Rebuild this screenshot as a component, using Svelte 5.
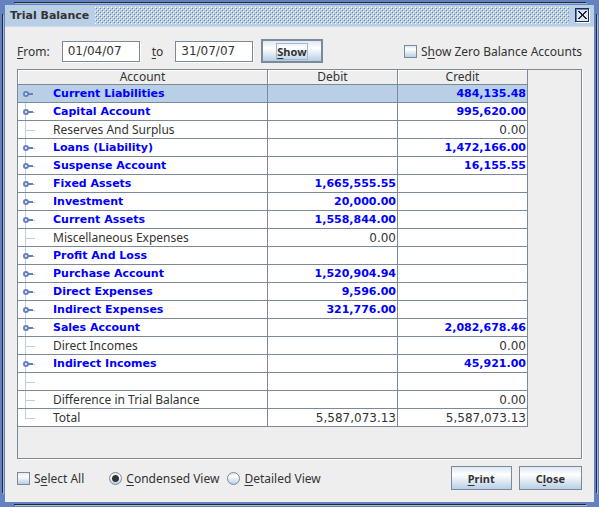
<script>
  let from = $state('01/04/07');
  let to = $state('31/07/07');
  let showZero = $state(false);
  let selectAll = $state(false);
  let view = $state('condensed');

  const rows = [
    { name: 'Current Liabilities', credit: '484,135.48', group: true, selected: true },
    { name: 'Capital Account', credit: '995,620.00', group: true },
    { name: 'Reserves And Surplus', credit: '0.00' },
    { name: 'Loans (Liability)', credit: '1,472,166.00', group: true },
    { name: 'Suspense Account', credit: '16,155.55', group: true },
    { name: 'Fixed Assets', debit: '1,665,555.55', group: true },
    { name: 'Investment', debit: '20,000.00', group: true },
    { name: 'Current Assets', debit: '1,558,844.00', group: true },
    { name: 'Miscellaneous Expenses', debit: '0.00' },
    { name: 'Profit And Loss', group: true },
    { name: 'Purchase Account', debit: '1,520,904.94', group: true },
    { name: 'Direct Expenses', debit: '9,596.00', group: true },
    { name: 'Indirect Expenses', debit: '321,776.00', group: true },
    { name: 'Sales Account', credit: '2,082,678.46', group: true },
    { name: 'Direct Incomes', credit: '0.00' },
    { name: 'Indirect Incomes', credit: '45,921.00', group: true },
    { name: '' },
    { name: 'Difference in Trial Balance', credit: '0.00' },
    { name: 'Total', debit: '5,587,073.13', credit: '5,587,073.13' }
  ];
</script>

<div class="window">
  <i class="edge top"></i><i class="edge bottom"></i><i class="edge left"></i><i class="edge right"></i>
  <header>
    <h1>Trial Balance</h1>
    <svg class="bumps" aria-hidden="true" shape-rendering="crispEdges">
      <defs>
        <pattern id="bump" width="4" height="4" patternUnits="userSpaceOnUse">
          <path d="M0 0h1v1H0zM2 2h1v1H2z" fill="#fff" />
          <path d="M1 1h1v1H1zM3 3h1v1H3z" fill="#6b86a8" />
        </pattern>
      </defs>
      <rect width="100%" height="100%" fill="url(#bump)" />
    </svg>
    <button class="close" aria-label="Close window">
      <svg width="15" height="15" viewBox="0 0 15 15" shape-rendering="crispEdges">
        <path d="M1 1h14v14H1z" fill="#fff" />
        <path d="M0 0h14v14H0z" fill="#20304c" />
        <path d="M1 1h12v12H1z" fill="#6382bf" />
        <path d="M2 2h11v11H2z" fill="#dce8f4" />
        <path d="M3 3h2v1H3zM10 3h2v1h-2zM4 4h2v1H4zM9 4h2v1H9zM5 5h2v1H5zM8 5h2v1H8zM6 6h3v2H6zM5 8h2v1H5zM8 8h2v1H8zM4 9h2v1H4zM9 9h2v1H9zM3 10h2v1H3zM10 10h2v1h-2z" fill="#20242c" />
      </svg>
    </button>
  </header>

  <main>
    <form class="filters" onsubmit={(e) => e.preventDefault()}>
      <label for="from"><u>F</u>rom:</label>
      <input id="from" class="date" type="text" bind:value={from} />
      <label for="to"><u>t</u>o</label>
      <input id="to" class="date" type="text" bind:value={to} />
      <button class="btn default"><span><u>S</u>how</span></button>
      <label class="option end"><input type="checkbox" bind:checked={showZero} /><span>S<u>h</u>ow Zero Balance Accounts</span></label>
    </form>

    <div class="pane">
      <table>
        <colgroup><col class="account" /><col class="amount" /><col class="amount" /></colgroup>
        <thead>
          <tr><th>Account</th><th>Debit</th><th>Credit</th></tr>
        </thead>
        <tbody>
          {#each rows as row, i}
            <tr class:group={row.group} class:selected={row.selected}>
              <td>
                <div class="node">
                  <svg width="17" height="17" viewBox="0 0 17 17" aria-hidden="true">
                    <path d="M7 {i === 0 ? 9 : 0}h1V{i === rows.length - 1 ? 9 : 17}H7zM7 9h10v1H7z" fill="#b8cfe5" />
                    {#if row.group}
                      <path d="M10 8h5v2h-5z" fill="#6382bf" />
                      <circle cx="8" cy="9" r="2" fill="#fff" stroke="#6382bf" stroke-width="2" />
                    {/if}
                  </svg>
                  <span>{row.name}</span>
                </div>
              </td>
              <td class="num">{row.debit ?? ''}</td>
              <td class="num">{row.credit ?? ''}</td>
            </tr>
          {/each}
        </tbody>
      </table>
    </div>

    <footer>
      <label class="option"><input type="checkbox" bind:checked={selectAll} /><span>S<u>e</u>lect All</span></label>
      <div class="views">
        <label class="option"><input type="radio" name="view" value="condensed" bind:group={view} /><span><u>C</u>ondensed View</span></label>
        <label class="option"><input type="radio" name="view" value="detailed" bind:group={view} /><span><u>D</u>etailed View</span></label>
      </div>
      <div class="actions">
        <button class="btn"><span><u>P</u>rint</span></button>
        <button class="btn"><span>C<u>l</u>ose</span></button>
      </div>
    </footer>
  </main>
</div>

<style>
  :global(body) {
    margin: 0;
  }
  .window,
  .window * {
    box-sizing: border-box;
  }
  .window {
    position: relative;
    display: flex;
    flex-direction: column;
    min-height: 100vh;
    padding: 5px;
    background: #6382bf;
    color: #333;
    font: 12px/15px "Noto Sans", sans-serif;
  }
  .edge {
    position: absolute;
    background: #222a38;
  }
  .top,
  .bottom {
    left: 14px;
    right: 13px;
    height: 1px;
    box-shadow: 1px 1px #a3b8dc;
  }
  .left,
  .right {
    top: 14px;
    bottom: 14px;
    width: 1px;
    box-shadow: 1px 1px #a3b8dc;
  }
  .top { top: 2px; }
  .bottom { bottom: 2px; }
  .left { left: 2px; }
  .right { right: 2px; }

  header {
    display: flex;
    align-items: center;
    gap: 6px;
    height: 22px;
    padding: 0 4px 0 5px;
    background: #b8cfe5;
    border-bottom: 1px solid #c9dbec;
  }
  h1 {
    margin: 0;
    font: bold 11px/15px "DejaVu Sans", sans-serif;
  }
  .bumps {
    flex: 1;
    min-width: 0;
    height: 17px;
  }
  .close {
    display: flex;
    padding: 0;
    border: 0;
    background: none;
  }

  main {
    display: flex;
    flex: 1;
    flex-direction: column;
    padding: 12px;
    background: #eee;
  }
  .filters {
    display: flex;
    align-items: center;
    height: 24px;
    margin-bottom: 6px;
  }
  .date {
    width: 78px;
    height: 21px;
    margin: 0 12px;
    padding: 0 5px;
    border: 1px solid #7a8a99;
    background: #fff;
    color: #333;
    box-shadow: 1px 1px #fff;
    font: 12px/15px "DejaVu Sans", sans-serif;
  }
  #to {
    margin-right: 8px;
  }
  u {
    text-underline-offset: 2px;
    text-decoration-thickness: 1px;
    text-decoration-skip-ink: none;
  }
  .btn {
    height: 24px;
    padding: 0 16px;
    border: 1px solid #7a8a99;
    background: linear-gradient(#dde8f3, #fff 35%, #b8cfe5);
    color: #333;
    font: bold 11px/15px "Noto Sans", sans-serif;
    white-space: nowrap;
  }
  .default {
    padding: 0 14px;
    border-width: 2px;
  }
  .default span {
    display: block;
    outline: 1px solid #a3b8cc;
  }
  .option {
    display: flex;
    align-items: center;
    gap: 4px;
    white-space: nowrap;
  }
  .end {
    margin-left: auto;
  }
  .option input {
    appearance: none;
    flex: none;
    width: 13px;
    height: 13px;
    margin: 0;
    border: 1px solid #7a8a99;
    background: linear-gradient(#dde8f3, #fff 30%, #b8cfe5);
  }
  .option input[type="radio"] {
    border-radius: 50%;
  }
  .option input[type="radio"]:checked {
    background: radial-gradient(circle, #333 3px, transparent 4px), linear-gradient(#dde8f3, #fff 30%, #b8cfe5);
  }
  .option input[type="checkbox"]:checked {
    background: #333;
    box-shadow: inset 0 0 0 2px #fff;
  }

  .pane {
    flex: 1;
    border: 1px solid #7a8a99;
    box-shadow: 1px 1px #fff;
  }
  table {
    table-layout: fixed;
    width: 510px;
    max-width: 100%;
    border-spacing: 0;
  }
  .account { width: 250px; }
  .amount { width: 130px; }
  th,
  td {
    padding: 0;
    border: solid #7a8a99;
    border-width: 0 1px 1px 0;
    font-weight: normal;
  }
  th {
    height: 15px;
    line-height: 14px;
    box-shadow: inset 1px 1px #fff;
  }
  td {
    height: 18px;
    line-height: 17px;
    background: #fff;
    white-space: nowrap;
  }
  .selected td {
    background: #b8cfe5;
  }
  .node {
    display: flex;
    gap: 18px;
    height: 17px;
  }
  .num {
    padding: 2px 1px 0 0;
    font-family: "DejaVu Sans", sans-serif;
    line-height: 15px;
    text-align: right;
  }
  .group td {
    padding-top: 0;
    color: #00f;
    font: bold 11px/17px "DejaVu Sans", sans-serif;
  }

  footer {
    display: flex;
    align-items: center;
    margin-top: 7px;
  }
  .views {
    display: flex;
    gap: 8px;
    margin-left: 25px;
  }
  .actions {
    display: flex;
    gap: 7px;
    margin-left: auto;
  }
</style>
